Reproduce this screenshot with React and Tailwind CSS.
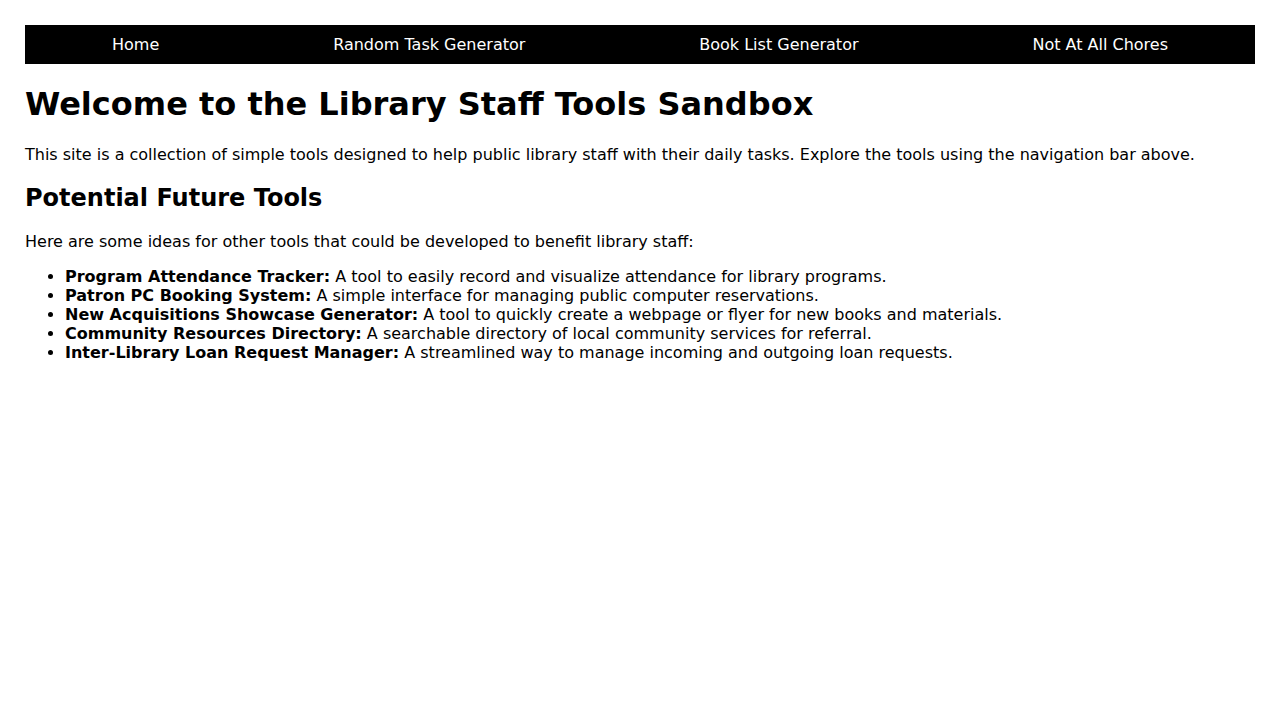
const navLinks = ["Home", "Random Task Generator", "Book List Generator", "Not At All Chores"];

const ideas = [
  ["Program Attendance Tracker:", "A tool to easily record and visualize attendance for library programs."],
  ["Patron PC Booking System:", "A simple interface for managing public computer reservations."],
  ["New Acquisitions Showcase Generator:", "A tool to quickly create a webpage or flyer for new books and materials."],
  ["Community Resources Directory:", "A searchable directory of local community services for referral."],
  ["Inter-Library Loan Request Manager:", "A streamlined way to manage incoming and outgoing loan requests."],
];

export default function App() {
  return (
    <div className="min-h-screen bg-white p-[25px] text-black font-['DejaVu_Sans',sans-serif] text-[16px] leading-[normal]">
      <nav className="bg-black flex justify-around py-[10px]">
        {navLinks.map((l) => (
          <a key={l} href="#" className="text-white">
            {l}
          </a>
        ))}
      </nav>
      <h1 className="text-[32px] font-bold mt-[21.44px] mb-[21.44px]">Welcome to the Library Staff Tools Sandbox</h1>
      <p className="my-4">
        This site is a collection of simple tools designed to help public library staff with their daily tasks. Explore the tools using the navigation bar above.
      </p>
      <h2 className="text-[24px] font-bold my-[19.92px]">Potential Future Tools</h2>
      <p className="my-4">Here are some ideas for other tools that could be developed to benefit library staff:</p>
      <ul className="list-disc pl-10 my-4">
        {ideas.map(([t, d]) => (
          <li key={t}>
            <strong className="font-bold">{t}</strong> {d}
          </li>
        ))}
      </ul>
    </div>
  );
}
